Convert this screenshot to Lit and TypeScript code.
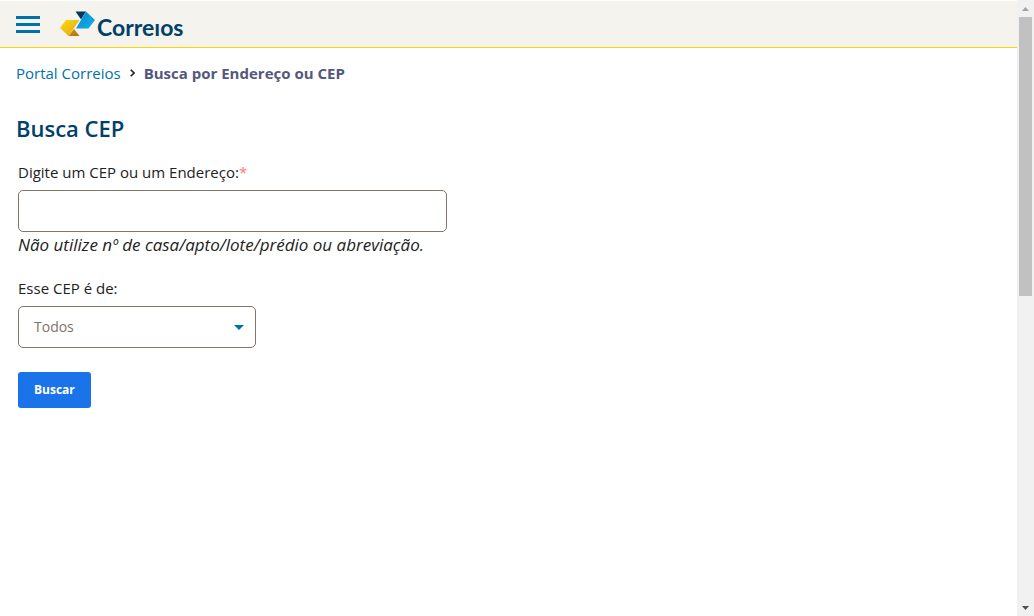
import { LitElement, html, css } from "lit";
import { customElement } from "lit/decorators.js";

@customElement("app-root")
export class AppRoot extends LitElement {
  static styles = css`
    :host {
      display: grid;
      grid-template-columns: minmax(0, 1fr) 17px;
      height: 100vh;
      overflow: hidden;
      background: #fff;
      color: #222;
      font-family: "Trebuchet MS", "Open Sans", "Noto Sans", sans-serif;
      font-size: 15px;
      line-height: 24px;
    }
    * {
      box-sizing: border-box;
    }
    .header {
      display: flex;
      align-items: center;
      gap: 20px;
      height: 48px;
      padding: 0 16px;
      background: #f4f3ee;
      border-top: 1px solid #fff;
      border-bottom: 1px solid #ffd400;
    }
    .menu {
      display: flex;
      padding: 0;
      border: 0;
      background: none;
    }
    .logo,
    .menu svg {
      display: block;
    }
    .content {
      padding: 13px 16px;
    }
    .crumbs {
      display: flex;
      align-items: center;
      gap: 9px;
    }
    .crumbs a {
      color: #0071ad;
      text-decoration: none;
    }
    .current {
      color: #54577e;
      font-weight: 700;
    }
    h1 {
      margin: 29px 0 18px;
      color: #00416b;
      font-size: 22px;
      line-height: 28px;
      font-weight: 600;
    }
    form {
      display: flex;
      flex-direction: column;
      align-items: flex-start;
      gap: 18px;
      padding: 0 2px;
    }
    .field {
      display: flex;
      flex-direction: column;
      max-width: 100%;
    }
    .field label {
      margin-bottom: 6px;
    }
    .required {
      color: #f77;
    }
    .box {
      height: 42px;
      max-width: 100%;
      padding: 0 15px;
      border: 1px solid #82756a;
      border-radius: 5px;
      background: #fff;
      color: #7b726a;
      font: inherit;
    }
    .address {
      width: 429px;
    }
    .kind {
      width: 238px;
      appearance: none;
      background: #fff
        url("data:image/svg+xml,%3Csvg xmlns='http://www.w3.org/2000/svg' width='10' height='5'%3E%3Cpath d='M0 0h10L5 5z' fill='%230071ad'/%3E%3C/svg%3E")
        no-repeat right 11px center;
      font-size: 14px;
    }
    .hint {
      font-size: 17px;
      line-height: 26px;
      font-style: italic;
    }
    .submit {
      height: 36px;
      margin-top: 6px;
      padding: 0 16px;
      border: 0;
      border-radius: 3px;
      background: #1a73e8;
      color: #fff;
      font: inherit;
      font-size: 12px;
      font-weight: 700;
    }
    .scrollbar {
      display: flex;
      flex-direction: column;
      background: #f1f1f1;
    }
    .arrow {
      display: flex;
      align-items: center;
      justify-content: center;
      height: 17px;
    }
    .track {
      flex: 1;
      padding: 0 2px;
    }
    .thumb {
      height: 48%;
      background: #c1c1c1;
    }
  `;

  render() {
    return html`
      <div class="page">
        <header class="header">
          <button class="menu" type="button" aria-label="Menu">
            <svg width="24" height="17" viewBox="0 0 24 17" fill="#0071ad">
              <path d="M0 0h24v3H0zM0 7h24v3H0zM0 14h24v3H0z" />
            </svg>
          </button>
          <a href="#" aria-label="Correios">
            <svg class="logo" width="136" height="34" viewBox="0 -2 136 34">
              <defs>
                <linearGradient id="blue" x1="0" y1="0" x2="1" y2="1">
                  <stop offset="0" stop-color="#0a86c4" />
                  <stop offset="1" stop-color="#12b0ee" />
                </linearGradient>
                <linearGradient id="gold" x1="0" y1="0" x2="1" y2="1">
                  <stop offset="0" stop-color="#fddb17" />
                  <stop offset="1" stop-color="#dda60c" />
                </linearGradient>
                <linearGradient id="brown" x1="0" y1="0" x2="1" y2="1">
                  <stop offset="0" stop-color="#d5940f" />
                  <stop offset="1" stop-color="#b3700e" />
                </linearGradient>
              </defs>
              <path d="M15.500 2.500H26l-5 8z" fill="#05375c" />
              <path d="M26 2.500l9 8.500-6.500 8.500H16z" fill="url(#blue)" />
              <path d="M6 11h13.500L8.500 27 0 19z" fill="url(#gold)" />
              <path d="M14 20l5.500 7h-11z" fill="url(#brown)" />
              <text
                x="37"
                y="27"
                font-family="Lato, sans-serif"
                font-size="23"
                font-weight="700"
                fill="#00416b"
              >Correıos</text>
            </svg>
          </a>
        </header>
        <main class="content">
          <nav class="crumbs" aria-label="Trilha">
            <a href="#">Portal Correios</a>
            <svg width="5" height="8" viewBox="0 0 5 8" fill="none" stroke="#222" stroke-width="1.600">
              <path d="M.7.7L4 4 .7 7.300" />
            </svg>
            <span class="current">Busca por Endereço ou CEP</span>
          </nav>
          <h1>Busca CEP</h1>
          <form @submit=${(e: Event) => e.preventDefault()}>
            <div class="field">
              <label for="endereco">Digite um CEP ou um Endereço:<span class="required">*</span></label>
              <input id="endereco" class="box address" type="text" aria-describedby="dica" />
              <span id="dica" class="hint">Não utilize nº de casa/apto/lote/prédio ou abreviação.</span>
            </div>
            <div class="field">
              <label for="tipo">Esse CEP é de:</label>
              <select id="tipo" class="box kind">
                <option>Todos</option>
              </select>
            </div>
            <button class="submit" type="submit">Buscar</button>
          </form>
        </main>
      </div>
      <div class="scrollbar" aria-hidden="true">
        <div class="arrow">
          <svg width="7" height="4" viewBox="0 0 7 4"><path d="M0 4L3.500 0 7 4z" fill="#a3a3a3" /></svg>
        </div>
        <div class="track"><div class="thumb"></div></div>
        <div class="arrow">
          <svg width="7" height="4" viewBox="0 0 7 4"><path d="M0 0h7L3.500 4z" fill="#505050" /></svg>
        </div>
      </div>
    `;
  }
}
